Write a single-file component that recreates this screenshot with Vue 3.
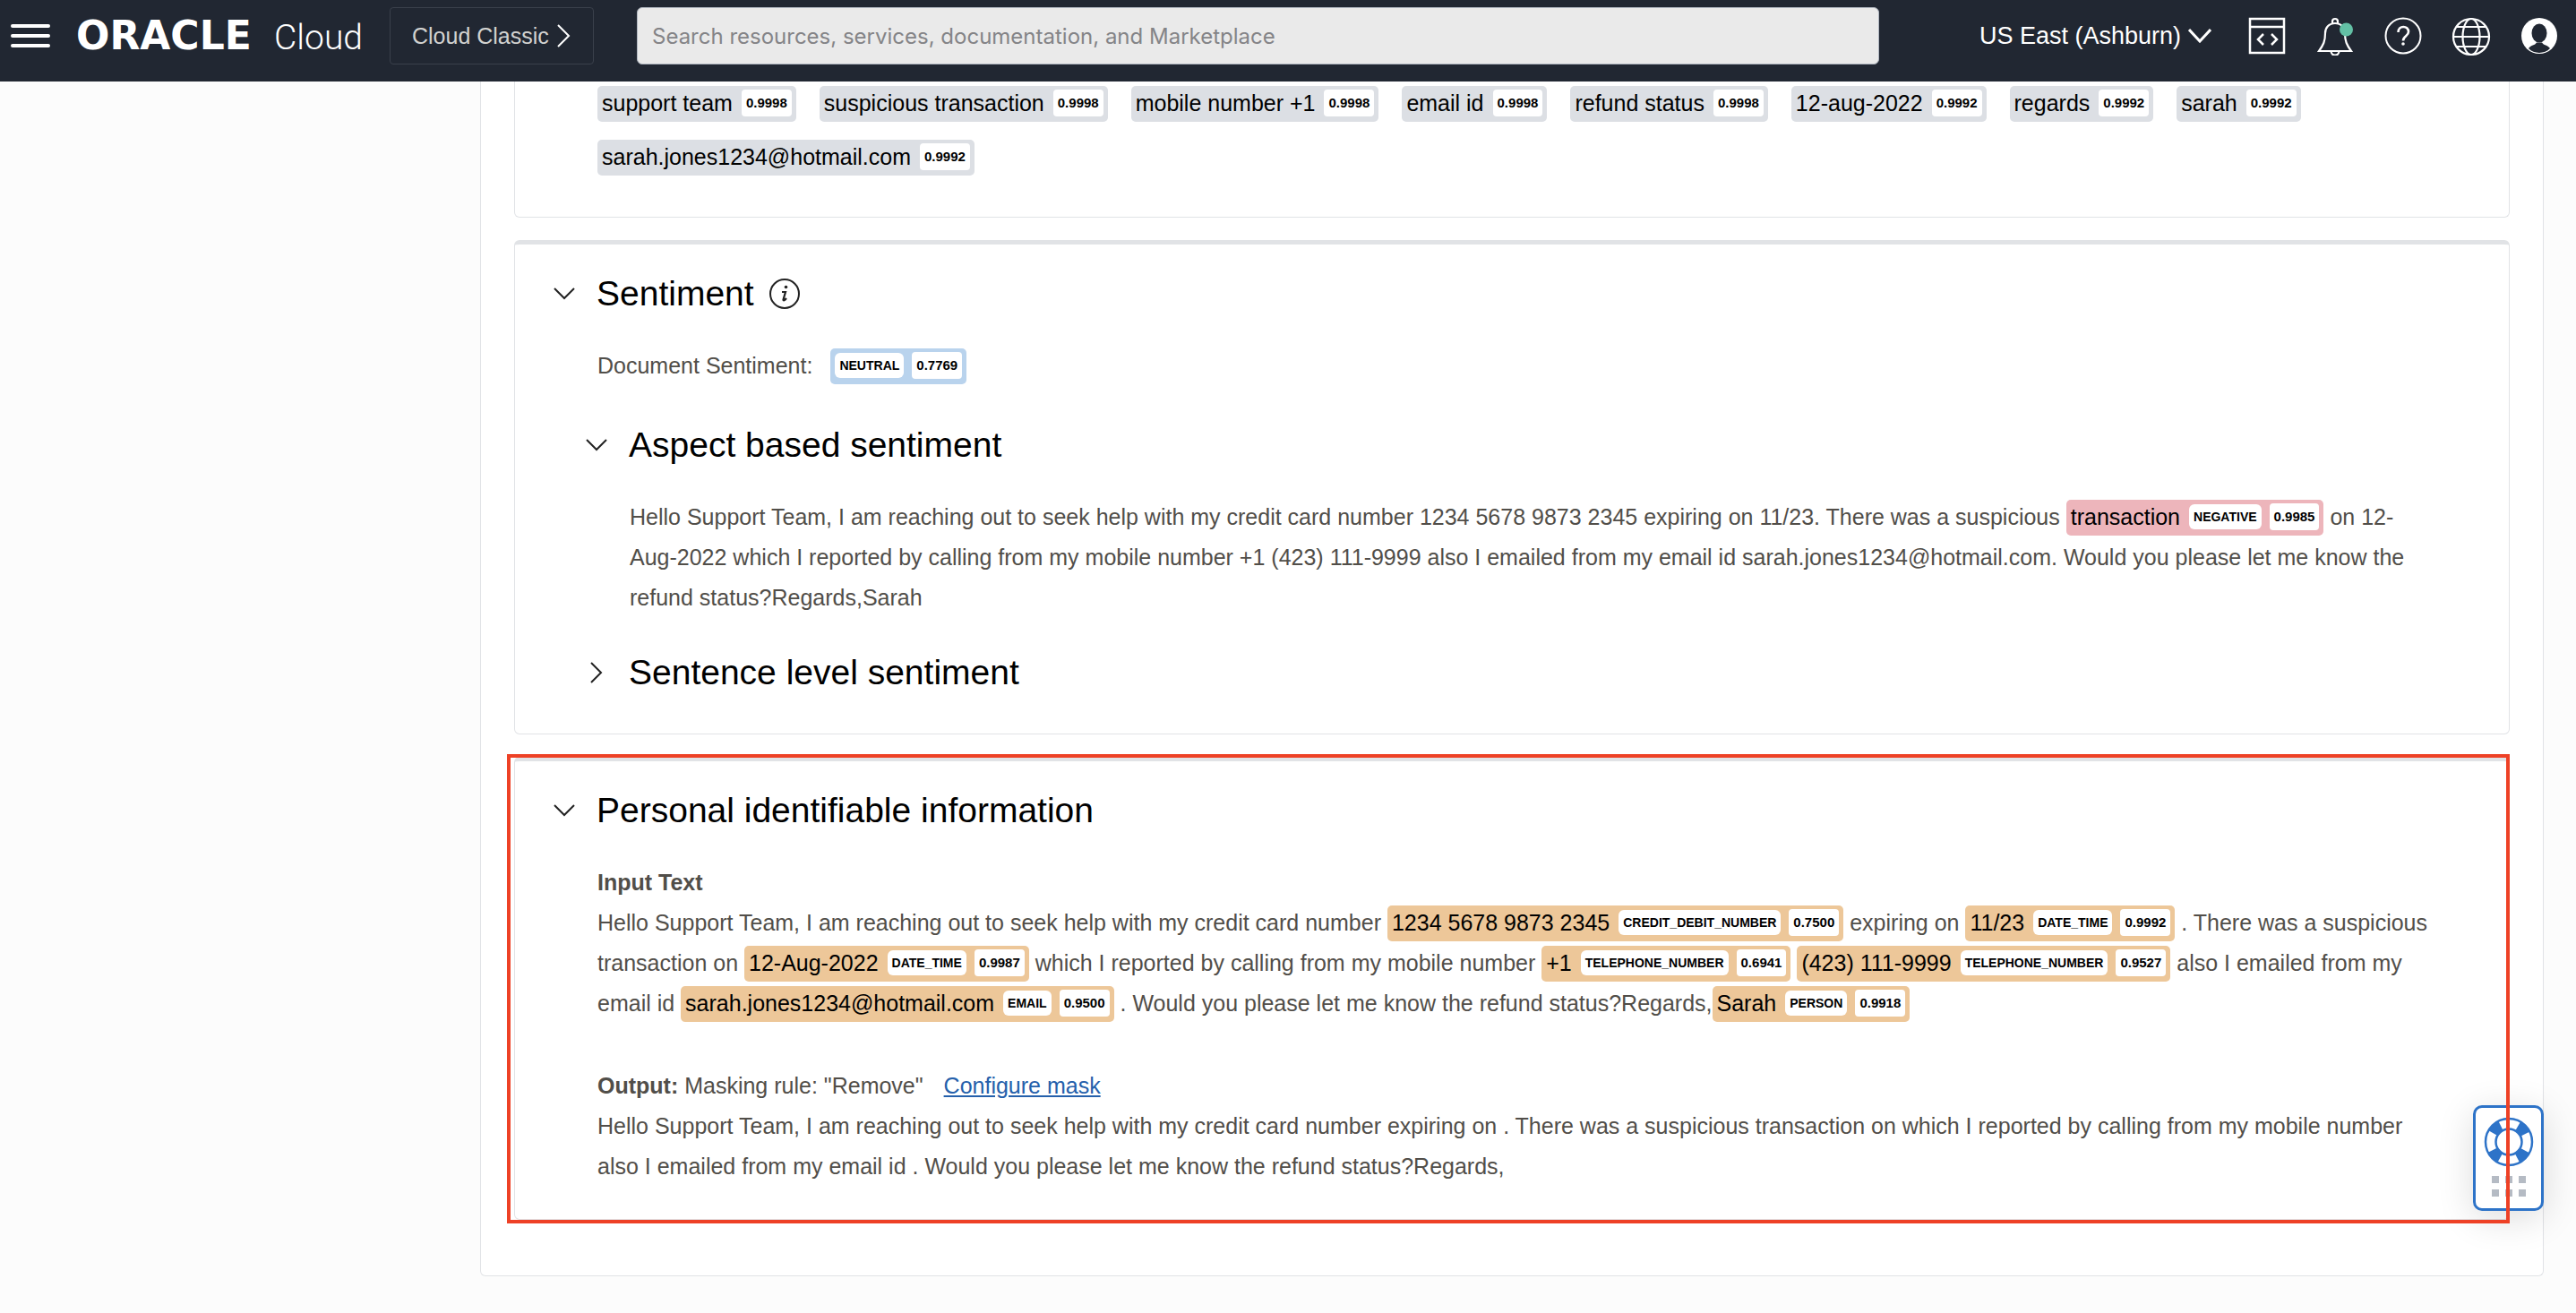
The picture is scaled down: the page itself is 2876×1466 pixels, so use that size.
<script setup>
import { h } from 'vue'

const keywords = [
  ['support team', '0.9998'],
  ['suspicious transaction', '0.9998'],
  ['mobile number +1', '0.9998'],
  ['email id', '0.9998'],
  ['refund status', '0.9998'],
  ['12-aug-2022', '0.9992'],
  ['regards', '0.9992'],
  ['sarah', '0.9992'],
  ['sarah.jones1234@hotmail.com', '0.9992']
]

const pii = [
  { text: 'Hello Support Team, I am reaching out to seek help with my credit card number ' },
  { tag: '1234 5678 9873 2345', label: 'CREDIT_DEBIT_NUMBER', score: '0.7500' },
  { text: ' expiring on ' },
  { tag: '11/23', label: 'DATE_TIME', score: '0.9992' },
  { text: ' . There was a suspicious transaction on ' },
  { tag: '12-Aug-2022', label: 'DATE_TIME', score: '0.9987' },
  { text: ' which I reported by calling from my mobile number ' },
  { tag: '+1', label: 'TELEPHONE_NUMBER', score: '0.6941' },
  { text: ' ' },
  { tag: '(423) 111-9999', label: 'TELEPHONE_NUMBER', score: '0.9527' },
  { text: ' also I emailed from my email id ' },
  { tag: 'sarah.jones1234@hotmail.com', label: 'EMAIL', score: '0.9500' },
  { text: ' . Would you please let me know the refund status?Regards,' },
  { tag: 'Sarah', label: 'PERSON', score: '0.9918' }
]

const Tag = (props) =>
  h('span', { class: 'tag' }, [
    props.text ? h('span', { class: 'tag-text' }, props.text) : null,
    props.label ? h('span', { class: 'tag-label' }, props.label) : null,
    h('span', { class: 'tag-score' }, props.score)
  ])
Tag.props = ['text', 'label', 'score']
</script>

<template>
  <div class="page">
    <header class="topbar">
      <button class="icon-btn menu" aria-label="Menu">
        <svg width="44" height="28" viewBox="0 0 44 28"><path d="M2 3h40M2 14h40M2 25h40" stroke="#fff" stroke-width="4" stroke-linecap="round" /></svg>
      </button>
      <a class="brand" href="#"><b>ORACLE</b><span>Cloud</span></a>
      <button class="classic">
        Cloud Classic
        <svg width="16" height="26" viewBox="0 0 16 26"><path d="M2 1l12 12L2 25" fill="none" stroke="#fff" stroke-width="2" /></svg>
      </button>
      <input class="search" type="search" aria-label="Search" placeholder="Search resources, services, documentation, and Marketplace" />
      <button class="region">
        US East (Ashburn)
        <svg width="26" height="16" viewBox="0 0 26 16"><path d="M1 1l12 13L25 1" fill="none" stroke="#fff" stroke-width="3" /></svg>
      </button>
      <nav class="tools">
        <button class="icon-btn" aria-label="Developer tools">
          <svg width="44" height="44" viewBox="0 0 44 44" fill="none" stroke="#fff"><path d="M3 3h38v38H3zM3 12h38" stroke-width="2.500" /><path d="M18 20l-6 6 6 6M27 20l6 6-6 6" stroke-width="2.500" /></svg>
        </button>
        <button class="icon-btn" aria-label="Announcements">
          <svg width="44" height="44" viewBox="0 0 44 44" fill="none" stroke="#fff" stroke-width="2.200"><path d="M19 8V6a3 3 0 0 1 6 0v2M22 8c-7 0-11 5-11 11 0 9-2 13-7 20h36c-5-7-7-11-7-20 0-6-4-11-11-11zM17.500 39c0 6 9 6 9 0" /><circle cx="34.500" cy="15" r="7.500" fill="#63c0a5" stroke="none" /></svg>
        </button>
        <button class="icon-btn" aria-label="Help">
          <svg width="44" height="44" viewBox="0 0 44 44" fill="none" stroke="#fff"><circle cx="22" cy="22" r="19.500" stroke-width="2" /><path d="M16.500 18c0-8 11.500-8 11.500-.5 0 5-6 4.500-6 10" stroke-width="2.600" /><circle cx="22" cy="31" r="1.800" fill="#fff" stroke="none" /></svg>
        </button>
        <button class="icon-btn" aria-label="Language">
          <svg width="44" height="44" viewBox="0 0 44 44" fill="none" stroke="#fff" stroke-width="2.200"><circle cx="22" cy="23" r="20" /><ellipse cx="22" cy="23" rx="9.500" ry="20" /><path d="M2 23h40M6 12h32M6 34h32" /></svg>
        </button>
        <button class="icon-btn" aria-label="Profile">
          <svg width="44" height="44" viewBox="0 0 44 44"><circle cx="22" cy="22" r="20" fill="#fff" /><ellipse cx="22" cy="19" rx="8.500" ry="10.500" fill="#212732" /><path d="M10 36c3-4 7-3 9-6.500h6c2 3.500 6 2.500 9 6.500-6 6.500-18 6.500-24 0z" fill="#212732" /></svg>
        </button>
      </nav>
    </header>

    <main class="panel">
      <section class="card keywords">
        <Tag v-for="k in keywords" :key="k[0]" :text="k[0]" :score="k[1]" />
      </section>

      <section class="card topped">
        <h2 class="heading">
          <button class="icon-btn toggle" aria-label="Collapse sentiment"><svg width="24" height="24" viewBox="0 0 24 24"><path d="M1 6l11 11L23 6" /></svg></button>
          Sentiment
          <svg class="info" width="36" height="36" viewBox="0 0 36 36"><circle cx="18" cy="18" r="16" fill="none" stroke="#222" stroke-width="2" /><circle cx="19.500" cy="10.500" r="1.800" fill="#222" /><path d="M15 16h4l-2.500 8.500c-.3 1.500 1.500 1 3.500-1.500" fill="none" stroke="#222" stroke-width="2.200" /></svg>
        </h2>
        <p class="copy document">Document Sentiment: <Tag class="blue" label="NEUTRAL" score="0.7769" /></p>
        <div class="sub">
          <h3 class="heading">
            <button class="icon-btn toggle" aria-label="Collapse aspect based sentiment"><svg width="24" height="24" viewBox="0 0 24 24"><path d="M1 6l11 11L23 6" /></svg></button>
            Aspect based sentiment
          </h3>
          <p class="copy">Hello Support Team, I am reaching out to seek help with my credit card number 1234 5678 9873 2345 expiring on 11/23. There was a suspicious <Tag class="pink" text="transaction" label="NEGATIVE" score="0.9985" /> on 12-Aug-2022 which I reported by calling from my mobile number +1 (423) 111-9999 also I emailed from my email id sarah.jones1234@hotmail.com. Would you please let me know the refund status?Regards,Sarah</p>
          <h3 class="heading">
            <button class="icon-btn toggle" aria-label="Expand sentence level sentiment"><svg width="24" height="24" viewBox="0 0 24 24"><path d="M6 1l11 11L6 23" /></svg></button>
            Sentence level sentiment
          </h3>
        </div>
      </section>

      <section class="card topped marked">
        <h2 class="heading">
          <button class="icon-btn toggle" aria-label="Collapse personal identifiable information"><svg width="24" height="24" viewBox="0 0 24 24"><path d="M1 6l11 11L23 6" /></svg></button>
          Personal identifiable information
        </h2>
        <div class="copy">
          <b>Input Text</b>
          <p><template v-for="(part, i) in pii" :key="i"><Tag v-if="part.tag" class="tan" :text="part.tag" :label="part.label" :score="part.score" /><template v-else>{{ part.text }}</template></template></p>
        </div>
        <div class="copy output">
          <p><b>Output:</b> Masking rule: "Remove" <a href="#">Configure mask</a></p>
          <p>Hello Support Team, I am reaching out to seek help with my credit card number expiring on . There was a suspicious transaction on which I reported by calling from my mobile number also I emailed from my email id . Would you please let me know the refund status?Regards,</p>
        </div>
      </section>
    </main>

    <button class="support" aria-label="Support">
      <svg width="56" height="56" viewBox="0 0 56 56" fill="none" stroke="#2d73c8"><circle cx="28" cy="28" r="20.500" stroke-width="11" stroke-dasharray="12 20.200" stroke-dashoffset="22.100" /><circle cx="28" cy="28" r="26" stroke-width="2.500" /><circle cx="28" cy="28" r="14.500" stroke-width="2.500" /></svg>
      <svg width="38" height="24" viewBox="0 0 38 24" fill="#b5bbc4"><path d="M0 0h8v8H0zM15 0h8v8h-8zM30 0h8v8h-8zM0 15h8v8H0zM15 15h8v8h-8zM30 15h8v8h-8z" /></svg>
    </button>
  </div>
</template>

<style>
body {
  margin: 0;
  background: #fcfcfc;
}
</style>

<style scoped>
.page {
  font-family: "Liberation Sans", Arial, sans-serif;
  font-size: 25px;
  color: #514e49;
}
.page :deep(*) {
  box-sizing: border-box;
}
button {
  font: inherit;
  color: inherit;
  cursor: pointer;
}
svg {
  display: block;
  flex: none;
}
h2,
h3,
p {
  margin: 0;
}
.icon-btn {
  display: flex;
  padding: 0;
  border: 0;
  background: none;
}

.topbar {
  display: flex;
  align-items: flex-start;
  height: 91px;
  padding: 8px 19px 0 12px;
  background: #212732;
  color: #fff;
}
.menu {
  margin-top: 18px;
}
.brand {
  display: flex;
  align-items: baseline;
  justify-content: space-between;
  width: 320px;
  margin: 10px 0 0 29px;
  line-height: 44px;
  color: #fff;
  text-decoration: none;
}
.brand b {
  font-family: "DejaVu Sans", sans-serif;
  font-size: 44px;
}
.brand span {
  font-family: Roboto, "Liberation Sans", sans-serif;
  font-size: 39px;
  font-weight: 300;
}
.classic {
  display: flex;
  align-items: center;
  gap: 8px;
  width: 228px;
  height: 64px;
  margin-left: 30px;
  padding: 0 0 0 24px;
  border: 1px solid #3a404b;
  border-radius: 4px;
  background: none;
  color: #d2d2d0;
}
.search {
  flex: 1;
  min-width: 0;
  height: 64px;
  margin: 0 112px 0 48px;
  padding: 0 16px;
  border: 1px solid #b0b6c0;
  border-radius: 6px;
  background: #eaeaea;
  font-family: Inter, "Liberation Sans", sans-serif;
  font-size: 24px;
}
.search::placeholder {
  color: #848487;
  opacity: 1;
}
.region {
  display: flex;
  align-items: center;
  gap: 8px;
  height: 64px;
  padding: 0;
  border: 0;
  background: none;
  font-size: 27px;
  white-space: nowrap;
}
.tools {
  display: flex;
  gap: 32px;
  margin: 10px 0 0 40px;
}

.panel {
  margin: 0 36px 0 536px;
  padding: 0 37px 62px;
  border: 1px solid #e1e3e6;
  border-top: 0;
  border-radius: 0 0 6px 6px;
  background: #fff;
}
.card {
  position: relative;
  border: 1px solid #e1e3e6;
  border-radius: 6px;
}
.topped {
  margin-top: 25px;
  padding: 33px 88px 46px 92px;
  border-top-width: 5px;
}
.keywords {
  display: flex;
  flex-wrap: wrap;
  gap: 20px 26px;
  padding: 5px 91px 46px 92px;
  border-top: 0;
  border-radius: 0 0 6px 6px;
}
.marked {
  padding-bottom: 36px;
}
.marked::after {
  content: "";
  position: absolute;
  z-index: 2;
  inset: -8px -1px -5px -9px;
  border: 4px solid #ee4126;
  pointer-events: none;
}

.heading {
  display: flex;
  align-items: center;
  height: 44px;
  margin-left: -49px;
  font-size: 39px;
  font-weight: 400;
  line-height: 44px;
  color: #000;
}
.toggle {
  margin-right: 24px;
}
.toggle path {
  fill: none;
  stroke: #222;
  stroke-width: 2;
}
.info {
  margin-left: 16px;
}
.copy {
  margin-top: 36px;
  line-height: 45px;
}
.document {
  display: flex;
  align-items: center;
  gap: 20px;
}
.output {
  margin-top: 47px;
}
.output a {
  margin-left: 16px;
  color: #2560ab;
}
.sub {
  margin: 44px 0 0 36px;
}
.sub .copy {
  margin-bottom: 39px;
}

.tag {
  display: inline-flex;
  align-items: center;
  padding: 4px 5px 6px;
  border-radius: 5px;
  background: #dcdfe4;
  line-height: 30px;
  color: #000;
  white-space: nowrap;
}
.tag :deep(.tag-text) {
  margin-right: 10px;
}
.tag :deep(.tag-label) {
  margin-right: 9px;
  padding: 0 5px;
  border-radius: 6px;
  background: #fff;
  font-size: 14px;
  font-weight: 700;
  line-height: 28px;
}
.tag :deep(.tag-score) {
  padding: 0 5px;
  border-radius: 4px;
  background: #fff;
  font-size: 15px;
  font-weight: 700;
}
.blue {
  background: #b9d3ed;
}
.pink {
  background: #edb5bb;
}
.tan {
  background: #edc799;
}

.support {
  position: fixed;
  z-index: 1;
  right: 36px;
  bottom: 114px;
  display: flex;
  flex-direction: column;
  align-items: center;
  gap: 10px;
  width: 79px;
  height: 118px;
  padding: 10px 0 0;
  border: 3px solid #2d73c8;
  border-radius: 10px;
  background: #fff;
  box-shadow: 0 8px 40px rgba(0, 0, 0, 0.14);
}
</style>
